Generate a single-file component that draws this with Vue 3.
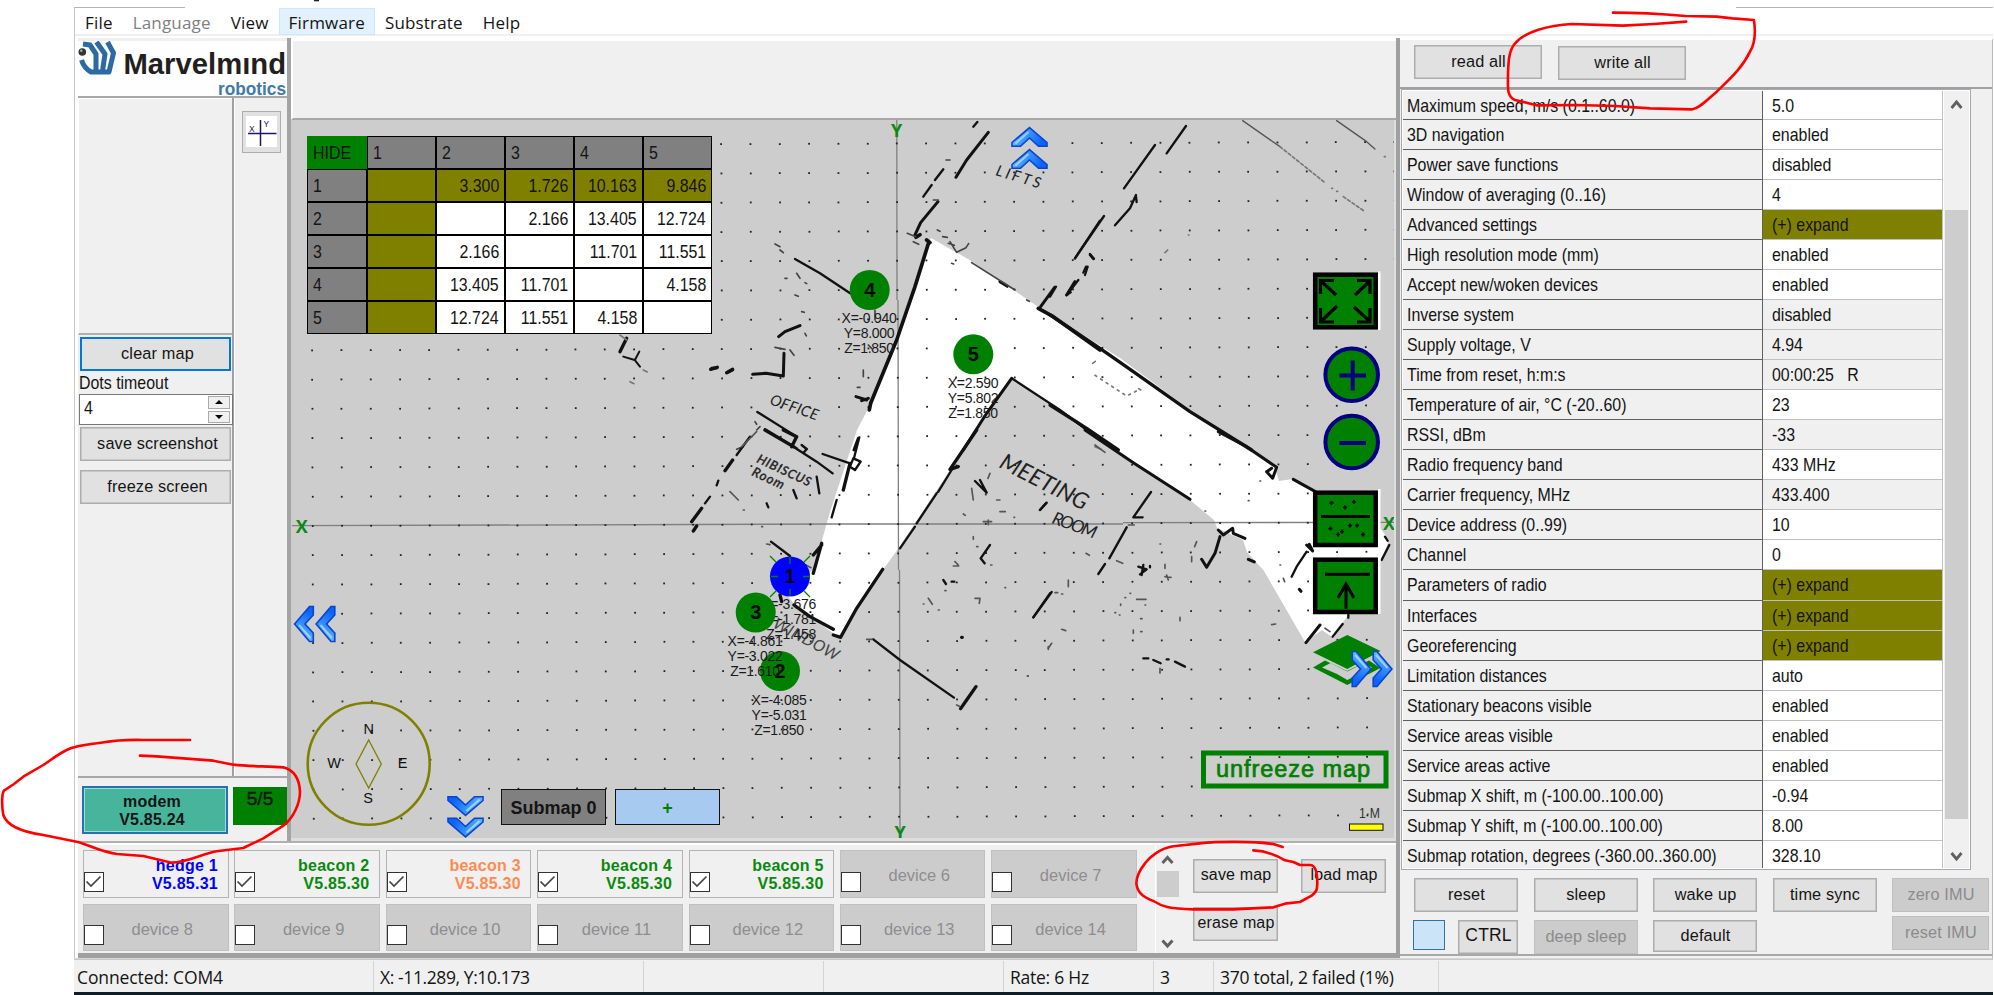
<script setup>
const menu = [
  { t: 'File' }, { t: 'Language', off: true }, { t: 'View' },
  { t: 'Firmware', hot: true }, { t: 'Substrate' }, { t: 'Help' },
]

const distances = [
  ['', '3.300', '1.726', '10.163', '9.846'],
  ['', '', '2.166', '13.405', '12.724'],
  ['', '2.166', '', '11.701', '11.551'],
  ['', '13.405', '11.701', '', '4.158'],
  ['', '12.724', '11.551', '4.158', ''],
]

const settings = [
  ['Maximum speed, m/s (0.1..60.0)', '5.0'],
  ['3D navigation', 'enabled'],
  ['Power save functions', 'disabled'],
  ['Window of averaging (0..16)', '4'],
  ['Advanced settings', '(+) expand', 'olive'],
  ['High resolution mode (mm)', 'enabled'],
  ['Accept new/woken devices', 'enabled'],
  ['Inverse system', 'disabled', 'ro'],
  ['Supply voltage, V', '4.94', 'ro'],
  ['Time from reset, h:m:s', '00:00:25\u00a0\u00a0 R', 'ro'],
  ['Temperature of air, °C (-20..60)', '23'],
  ['RSSI, dBm', '-33', 'ro'],
  ['Radio frequency band', '433 MHz'],
  ['Carrier frequency, MHz', '433.400', 'ro'],
  ['Device address (0..99)', '10'],
  ['Channel', '0'],
  ['Parameters of radio', '(+) expand', 'olive'],
  ['Interfaces', '(+) expand', 'olive'],
  ['Georeferencing', '(+) expand', 'olive'],
  ['Limitation distances', 'auto'],
  ['Stationary beacons visible', 'enabled'],
  ['Service areas visible', 'enabled'],
  ['Service areas active', 'enabled'],
  ['Submap X shift, m (-100.00..100.00)', '-0.94'],
  ['Submap Y shift, m (-100.00..100.00)', '8.00'],
  ['Submap rotation, degrees (-360.00..360.00)', '328.10'],
]

const devices = [
  { n: 'hedge 1', v: 'V5.85.31', c: 'blue' },
  { n: 'beacon 2', v: 'V5.85.30', c: 'green' },
  { n: 'beacon 3', v: 'V5.85.30', c: 'orange' },
  { n: 'beacon 4', v: 'V5.85.30', c: 'green' },
  { n: 'beacon 5', v: 'V5.85.30', c: 'green' },
  ...[6, 7, 8, 9, 10, 11, 12, 13, 14].map((i) => ({ n: 'device ' + i })),
]

const status = [
  ['Connected: COM4', 's1'], ['X: -11.289, Y:10.173', 's2'], ['', 's3'], ['', 's3'],
  ['Rate: 6 Hz', 's4'], ['3', 's5'], ['370 total, 2 failed (1%)', 's6'], ['', 's7'],
]

// Metre grid, very slightly rotated against the screen axes
const step = 29.27
const tilt = 0.0032
const dots = []
for (let j = -13; j <= 10; j++) {
  for (let i = -20; i <= 17; i++) {
    const x = 898 + step * (i + tilt * j)
    const y = 524 + step * (j - tilt * i)
    if (x > 294 && x < 1396 && y > 122 && y < 836) dots.push([Math.round(x * 3) / 3, Math.round(y * 3) / 3])
  }
}

const labels = [
  { x: 762, y: 609, w: 54, t: ['X=-3.676', 'Y=-1.781', 'Z=1.458'] },
  { x: 728, y: 646, w: 54, t: ['X=-4.861', 'Y=-3.022', 'Z=1.610'] },
  { x: 752, y: 704.5, w: 54, t: ['X=-4.085', 'Y=-5.031', 'Z=1.850'] },
  { x: 842, y: 323, w: 54, t: ['X=-0.940', 'Y=8.000', 'Z=1.850'] },
  { x: 948, y: 388, w: 50, t: ['X=2.590', 'Y=5.802', 'Z=1.850'] },
]
const beacons = [
  { n: 3, x: 755.7, y: 612.5 }, { n: 2, x: 780, y: 671 },
  { n: 4, x: 869.7, y: 290 }, { n: 5, x: 973.3, y: 354.3 },
]
const arrows = [
  [1029.5, 127, 0], [1029.5, 149, 0],
  [465.5, 816, 180], [465.5, 837.5, 180],
  [294, 624, -90], [315.5, 624, -90],
  [1371.5, 669, 90], [1392.5, 669, 90],
]
</script>

<template>
  <div class="stage">
    <div class="window">
      <nav class="menu">
        <span v-for="m in menu" :key="m.t" :class="{ off: m.off, hot: m.hot }">{{ m.t }}</span>
      </nav>
      <div class="body">
        <div class="work">
          <div class="upper">
            <aside class="left">
              <svg class="logo" width="209" height="56" viewBox="78 41 209 56">
                <g fill="none" stroke="#2b6aa3" stroke-width="5" stroke-linejoin="round">
                  <path d="M81.500 60 Q84 68 91 72 H109 L113.500 53 L107.500 42" />
                  <path d="M83 44 L90 45 L96 54 V71" />
                  <path d="M96.500 42 L105 54 L102.500 71" />
                </g>
                <circle cx="82.300" cy="52" r="3.800" fill="#333" />
                <circle cx="81.300" cy="50.800" r="1.200" fill="#aaa" />
                <text x="123.500" y="74" font-size="30" font-weight="700" fill="#231f20" textLength="162.500" lengthAdjust="spacingAndGlyphs">Marvelmınd</text>
                <text x="218" y="94.500" font-size="19" font-weight="700" fill="#4179a8" textLength="68" lengthAdjust="spacingAndGlyphs">robotics</text>
              </svg>
              <div class="tools">
                <div class="toolcol">
                  <div class="blank"></div>
                  <button class="btn focus">clear map</button>
                  <label class="cond">Dots timeout</label>
                  <div class="spin">
                    <span class="cond">4</span>
                    <div class="ud"><i><b class="up"></b></i><i><b class="dn"></b></i></div>
                  </div>
                  <button class="btn b1">save screenshot</button>
                  <button class="btn b2">freeze screen</button>
                </div>
                <div class="sidecol">
                  <div class="xy">
                    <svg width="31" height="31" viewBox="0 0 31 31">
                      <rect width="31" height="31" fill="#fff" />
                      <path d="M14.500 4 V30 M2 17.500 H30.500" stroke="#1c1464" stroke-width="1.500" />
                      <text x="3" y="15.500" font-size="8.500" fill="#1c1464">X</text>
                      <text x="17.500" y="11" font-size="8.500" fill="#1c1464">Y</text>
                    </svg>
                  </div>
                </div>
              </div>
              <div class="modemrow">
                <div class="modem">modem<br />V5.85.24</div>
                <div class="count">5/5</div>
              </div>
            </aside>
            <section class="center">
              <div class="top"></div>
              <div class="mapbox">
                <svg class="map" width="1104" height="719" viewBox="292 120 1104 719">
                  <defs>
                    <linearGradient id="chev" x1="0" y1="0" x2="1" y2="0.300">
                      <stop offset="0" stop-color="#9ad4ff" />
                      <stop offset="0.450" stop-color="#3f9cff" />
                      <stop offset="1" stop-color="#0a62ff" />
                    </linearGradient>
                  </defs>
                  <path d="M931 238 L968 259 L1040 308 L1120 358 L1217 430 L1275 468 L1279 481 L1293 479 L1314 491 L1380 528 L1389 540 L1383 557 L1352 610 L1332 637 L1322 630 L1305 642 L1264 571 L1247 552 L1243 540 L1217 528 L1214 520 L1190 500 L1084 430 L1012 378 L963 450 L950 470 L898 549 L885 567 L838 637 L795 605 L783 590 L813 570 L822 540 L830 512 L857 430 L870 405 L900 325 Z" fill="#fff" />
                  <path d="M292 525.700 L840 524 L1123 524 M1123 522.700 L1396 522.300 M896.800 120 L897 300 M898 300 L898.500 570 M899.500 570 L900 834" stroke="#808080" stroke-width="1.300" fill="none" />
                  <g fill="#222"><rect v-for="(d, i) in dots" :key="i" :x="d[0] - 0.800" :y="d[1] - 0.800" width="1.800" height="1.800" /></g>

                  <g fill="none" stroke="#111" stroke-linecap="round" stroke-linejoin="round">
                    <g transform="translate(290 110) scale(.3333)">
                      <path stroke-width="10" d="M1010 685 L990 725 M1262 778 L1282 772 M1310 788 L1328 778" />
                      <path stroke-width="6" d="M1000 740 L1034 750 L1050 770 M1048 725 L1036 748" />
                      <path stroke-width="5" stroke="#777" d="M990 675 L1010 690 M1060 780 l12 6 M1020 815 l12 6" />
                    </g>
                    <g transform="translate(700 100) scale(.3333)">
                      <path stroke-width="11" d="M687 425 L645 560 L590 720 L512 910 L508 930 M1015 625 L1060 650 L1200 750 M680 420 l10 8 M648 412 l12 -8" />
                      <path stroke-width="9" d="M935 835 L860 940 L790 1050 M768 232 L800 180 L865 97 M645 405 L662 368 L714 305 M468 890 L500 900 M505 895 L485 902 M158 823 L198 820 L250 828 M250 828 L252 760 M236 710 L255 695 L300 677 M82 818 l16 -8 M35 805 l16 -2 M475 1015 L462 1050 M1022 620 L1064 562 M1100 585 L1125 545 M900 545 l22 14" />
                      <path stroke-width="7" d="M285 477 L360 520 L455 583 M670 290 L695 255 M705 240 L730 208 M820 80 L832 66 M1125 475 L1200 362 M940 838 L1080 930 L1200 1020 M172 936 L290 1010 L275 1040 M195 988 L290 1045 M1155 525 l8 -25 M1170 462 l12 14" />
                      <path stroke-width="5" stroke="#444" d="M225 432 l15 8 M240 450 l10 8 M738 180 h12 M700 300 l15 0 M622 400 l25 10 M640 425 l16 8 M712 390 l8 4 M728 410 l14 2 M745 430 l18 6 M750 425 l20 32 l28 -14 l8 -12 M755 490 l6 2 M815 488 L945 570 M980 600 l8 4 M290 520 l10 15 M255 535 l6 0 M285 585 l10 4 M315 548 l5 3 M305 635 l8 2 M315 700 l4 8 M225 742 l30 6 M270 750 l12 16 M490 810 v20 M472 862 h8 M505 735 l10 10 M525 630 v30 M165 965 l5 8 M150 1010 l-15 20 M180 980 l-10 10 M130 1040 l-20 8 M310 1040 l12 8" />
                    </g>
                    <g transform="translate(1050 100) scale(.3333)">
                      <path stroke-width="10" d="M0 645 L150 745 L250 815 L420 935 L605 1050 M0 915 L110 985 L205 1050" />
                      <path stroke-width="7" d="M408 78 L350 160 M315 135 L222 265 M258 285 L240 325 L195 376 M162 348 L75 475 M120 465 l10 12 M108 500 l-8 18 M85 540 L50 585 l12 -8 M0 590 L18 560 M258 290 l2 16" />
                      <path stroke-width="4" stroke="#555" d="M578 62 L690 140 M860 62 L950 125 M950 125 l25 22" />
                      <path stroke-width="5" stroke="#777" stroke-dasharray="9 7" d="M690 140 L825 248 M880 290 L945 335" />
                      <path stroke-width="5" stroke="#777" stroke-dasharray="6 14" d="M135 826 L230 888 L262 872" />
                      <path stroke-width="5" stroke="#777" d="M345 458 l8 -8 M128 790 l8 -6 M266 866 l6 4 M1003 170 h3 M415 405 h2 M135 1040 l18 8 M845 265 h3 M860 274 h3" />
                    </g>
                    <g transform="translate(650 430) scale(.3333)">
                      <path stroke-width="10" d="M980 0 L900 118 l25 -8 M600 100 L580 180 M515 340 L490 430 M515 345 L490 375 M432 525 L480 560 L550 598 M550 615 L572 622 L620 535 L698 418 M345 0 L430 50 M400 0 L440 20 L425 50 M390 495 l5 20 M935 622 h2 M125 275 L155 235 M130 303 l10 -15 M225 122 L248 90 M932 836 L950 810 L978 770" />
                      <path stroke-width="7" d="M430 50 L500 95 L548 130 M518 72 L600 100 M628 22 L612 85 M610 85 L632 95 L615 120 L600 110 L610 85 M560 210 L545 262 M905 120 L865 185 M860 190 L800 280 M795 290 L750 355 M363 335 L420 378 M670 628 L750 690 L912 803 M1150 562 L1200 490 M1020 345 L992 385 L1004 400 M990 150 l20 38 l-35 -35 M880 450 l8 12 M905 455 h8 M300 20 L260 75 M180 200 L165 220 M205 152 l-5 14 M455 45 l15 12 l-8 10 M500 140 l8 50 M430 180 l10 25 M1188 220 L1170 240 M350 220 l5 12" />
                      <path stroke-width="5" stroke="#555" d="M240 185 l25 25 M280 240 h3 M335 290 h3 M350 342 l10 2 M915 395 l10 10 M910 408 h16 M835 505 l12 18 M820 522 h2 M865 540 h3 M975 505 l15 0 l-2 15 M970 320 v8 M980 350 h4 M1000 275 h25 M1015 270 v14 M1040 210 h10 M1050 245 h16 M1092 262 h2 M940 252 l6 4 M965 175 l5 35 M1020 130 l-6 15 M650 628 h15 M920 825 l8 4 M1132 738 h3 M1065 473 h2 M885 482 h3 M1022 405 h4 M1195 650 v8 M468 405 l15 8 M320 5 L275 50" />
                    </g>
                    <g transform="translate(1000 430) scale(.3333)">
                      <path stroke-width="9" d="M255 0 L400 98 L570 208 M655 5 L740 50 L830 112 L818 145 L800 125 L815 115 M880 148 L945 184 M655 300 L670 315 L698 295 L700 310 L735 325 M660 320 L645 370 L620 412 L605 388 M920 345 l18 18 l-10 -20 M918 638 L960 585 M898 478 l5 6 M745 388 l18 8" />
                      <path stroke-width="7" d="M453 186 L400 262 h28 M380 292 L328 385 M315 402 L295 432 M100 562 L155 486 M920 365 L890 410 L875 440 M998 620 L1028 582 M1045 555 v8 M1168 345 L1145 390 M1155 320 l8 12 M430 685 h15 M460 690 l22 10 M500 688 h6 M525 695 l30 15 M120 240 L140 218 M415 410 l25 8 l-20 15 M430 405 l-5 30 M450 408 v4" />
                      <path stroke-width="5" stroke="#555" d="M285 45 l30 22 M385 285 h18 M258 370 l10 6 M185 598 l12 4 M145 655 l10 -15 M165 488 h8 M185 492 h3 M205 450 v20 M345 548 h2 M358 555 h2 M362 522 v4 M375 503 h2 M390 490 h2 M410 508 h28 M435 525 h2 M400 600 v10 M422 605 h4 M422 566 h4 M540 562 v10 M815 584 l12 -2 M495 440 l18 2 M500 435 l5 15 M495 415 v-12 M590 335 l-6 15 M575 380 v15 M615 243 h2 M780 153 h2 M745 212 h2 M840 405 h2 M850 445 l4 10 M480 715 v14 M480 342 h2 M350 392 l18 8 M975 595 l15 10 M83 738 h2" />
                    </g>
                  </g>

                  <g class="hand" fill="#222">
                    <text transform="translate(998 467) rotate(27)" font-size="23" textLength="96">MEETING</text>
                    <text transform="translate(1051 523) rotate(20)" font-size="17.500" textLength="46">ROOM</text>
                    <text transform="translate(756 462) rotate(25)" font-size="12.500" textLength="58" stroke="#222" stroke-width="0.400">HIBISCUS</text>
                    <text transform="translate(751 475) rotate(25)" font-size="13" textLength="34" stroke="#222" stroke-width="0.400">Room</text>
                    <text transform="translate(769 404) rotate(19)" font-size="15" textLength="50">OFFICE</text>
                    <text transform="translate(995 175) rotate(17)" font-size="15" textLength="46">LIFTS</text>
                    <text transform="translate(772 627) rotate(28)" font-size="16" textLength="72" fill="#444">WINDOW</text>
                  </g>

                  <circle cx="790" cy="576.500" r="20" fill="#0000ff" />
                  <path d="M790 557 v7 M790 589 v7 M771 576.500 h7 M803 576.500 h7 M770 556 l6 6 M810 556 l-6 6 M770 597 l6 -6 M810 597 l-6 -6" stroke="#008000" stroke-width="1.300" />
                  <text class="num" x="790" y="583" text-anchor="middle">1</text>
                  <g v-for="(b, k) in beacons" :key="b.n">
                    <g v-if="k === 0" class="xyz">
                      <text v-for="(t, i) in labels[0].t" :key="t" x="816" :y="labels[0].y + i * 15" text-anchor="end">{{ t }}</text>
                    </g>
                    <circle :cx="b.x" :cy="b.y" r="20" fill="#008000" />
                    <text class="num" :x="b.x" :y="b.y + 6.500" text-anchor="middle">{{ b.n }}</text>
                  </g>
                  <g class="xyz" v-for="l in labels.slice(1)" :key="l.x">
                    <text v-for="(t, i) in l.t" :key="t" :x="l.x + l.w / 2" :y="l.y + i * 15" text-anchor="middle">{{ t }}</text>
                  </g>

                  <g class="axis">
                    <text x="896.500" y="137" text-anchor="middle">Y</text>
                    <text x="900" y="839" text-anchor="middle">Y</text>
                    <text x="301.700" y="532.500" text-anchor="middle">X</text>
                    <text x="1389" y="529.500" text-anchor="middle">X</text>
                  </g>

                  <g fill="none" stroke="#808000">
                    <circle cx="368.700" cy="763.700" r="61" stroke-width="2.600" />
                    <path d="M368.700 740 L381.300 764 L368.700 788 L356 764 Z" stroke-width="1.300" />
                  </g>
                  <g font-size="14.500" fill="#111" text-anchor="middle">
                    <text x="368.700" y="733.500">N</text><text x="334" y="768">W</text>
                    <text x="402.700" y="768">E</text><text x="368" y="802.500">S</text>
                  </g>

                  <g>
                    <path d="M1378 271.500 h2.500 V330 h-2.500 Z M1378 489 h2.500 V547 h-2.500 Z M1378 556 h2.500 V614 h-2.500 Z" fill="#fff" />
                    <g fill="#008000" stroke="#000" stroke-width="4.500">
                      <rect x="1315.200" y="274.700" width="60.500" height="52.600" />
                      <rect x="1315.200" y="492.700" width="60.500" height="52.300" />
                      <rect x="1315.200" y="559.700" width="60.500" height="52.300" />
                    </g>
                    <g fill="none" stroke="#000" stroke-width="3.200">
                      <path d="M1334 280.500 H1320.500 V294 M1321 281 L1336 295 M1357 280.500 H1370 V294 M1370 281 L1355 295 M1320.500 308 V322 H1334 M1321 321.500 L1337 306 M1370 308 V322 H1357 M1370 321.500 L1354 307" />
                      <path d="M1321 516.500 H1370 M1325 574.300 H1370" stroke-width="3" />
                      <path d="M1346 609 V583 M1338 598 L1346 584 L1354 598" stroke-width="3" />
                    </g>
                    <path d="M1331.500 501v4m-2-2h4 M1354 500v4m-2-2h4 M1345 505.500v4m-2-2h4 M1330.500 526.500v4m-2-2h4 M1350 523.500v4m-2-2h4 M1357 523.500v4m-2-2h4 M1342 529.500v4m-2-2h4 M1338 532.500v4m-2-2h4 M1363 532.500v4m-2-2h4" stroke="#000" stroke-width="1.600" />
                    <g fill="#008000" stroke="#000080" stroke-width="4">
                      <circle cx="1351.700" cy="374.700" r="26.300" />
                      <circle cx="1351.700" cy="442" r="26.300" />
                      <path d="M1339.500 375.500 H1366 M1352.700 360.500 V390.500 M1339.500 443 H1366" />
                    </g>
                    <path d="M1313 667.500 L1325 660.500 L1347 671 L1369 660.500 L1380.500 668 L1347.300 685 Z" fill="#008000" />
                    <path d="M1322 667.500 L1330.500 663 L1347.300 671.500 L1364 663 L1372 667.500 L1347.300 680 L1337 674 Z" fill="#cdcdcd" />
                    <path d="M1313 652.300 L1347.300 635 L1380.500 651 L1347.300 669 Z" fill="#008000" />
                  </g>

                  <rect x="1203.500" y="753" width="182.500" height="33" fill="none" stroke="#008000" stroke-width="5" />
                  <text x="1216" y="776.500" font-size="23.500" fill="#008000" stroke="#008000" stroke-width="0.700" textLength="154">unfreeze map</text>
                  <text x="1359" y="818" font-size="14" fill="#333" textLength="21" lengthAdjust="spacingAndGlyphs">1·M</text>
                  <rect x="1349.500" y="824" width="33.500" height="6.300" fill="#ff0" stroke="#111" />

                  <g v-for="(a, i) in arrows" :key="i" :transform="`translate(${a[0]} ${a[1]}) rotate(${a[2]})`">
                    <path d="M0 0.600 L17.500 15.500 V19.300 H9 L0 11 L-9 19.300 H-17.500 V15.500 Z" fill="url(#chev)" stroke="#0a45c8" stroke-width="1.600" />
                    <path d="M-14 16.500 L-1 5" stroke="#d5efff" stroke-width="2" opacity=".6" />
                  </g>
                </svg>
                <div class="dist">
                  <div class="h hide"><span class="cond">HIDE</span></div>
                  <div v-for="n in 5" :key="'c' + n" class="h"><span class="cond">{{ n }}</span></div>
                  <template v-for="(r, i) in distances" :key="i">
                    <div class="h"><span class="cond">{{ i + 1 }}</span></div>
                    <div v-for="(c, j) in r" :key="j" class="d" :class="{ ol: i === 0 || j === 0 }"><span class="cond">{{ c }}</span></div>
                  </template>
                </div>
                <div class="sub sub0">Submap 0</div>
                <div class="sub plus">+</div>
              </div>
            </section>
          </div>
          <div class="lower">
            <div class="devs">
              <div v-for="d in devices" :key="d.n" class="dev" :class="d.c || 'none'">
                <i class="chk"><svg v-if="d.c" width="17" height="17" viewBox="0 0 17 17"><path d="M1.500 8.500 L6 13 L15.500 3.500" fill="none" stroke="#444" stroke-width="1.700" /></svg></i>
                <span>{{ d.n }}<br v-if="d.v" />{{ d.v }}</span>
              </div>
            </div>
            <div class="vbar">
              <svg width="23" height="105" viewBox="0 0 23 105">
                <path d="M6.500 16 L11.500 10.500 L16.500 16 M6.500 93.500 L11.500 99 L16.500 93.500" fill="none" stroke="#606060" stroke-width="3" />
                <rect x="1" y="24" width="22" height="26" fill="#cdcdcd" />
              </svg>
            </div>
            <div class="mapbtns">
              <button class="btn">save map</button><button class="btn">load map</button>
              <button class="btn">erase map</button>
            </div>
          </div>
        </div>
        <aside class="right">
          <div class="rw">
            <button class="btn">read all</button><button class="btn wr">write all</button>
          </div>
          <div class="grid">
            <div class="rows">
              <div v-for="s in settings" :key="s[0]" class="row">
                <div class="k"><span class="cond">{{ s[0] }}</span></div>
                <div class="v" :class="s[2]"><span class="cond">{{ s[1] }}</span></div>
              </div>
            </div>
            <svg class="gbar" width="25" height="777" viewBox="0 0 25 777">
              <rect x="1" y="119" width="23" height="609" fill="#cdcdcd" />
              <path d="M7.500 17 L12.500 11 L17.500 17 M7.500 762 L12.500 768 L17.500 762" fill="none" stroke="#606060" stroke-width="2.800" />
            </svg>
          </div>
          <div class="cmds">
            <div class="col c1">
              <button class="btn">reset</button>
              <div class="pair"><i class="bluebox"></i><button class="btn ctrl">CTRL</button></div>
            </div>
            <div class="col"><button class="btn">sleep</button><button class="btn dis">deep sleep</button></div>
            <div class="col"><button class="btn">wake up</button><button class="btn def">default</button></div>
            <div class="col"><button class="btn">time sync</button></div>
            <div class="col c5"><button class="btn dis">zero IMU</button><button class="btn dis">reset IMU</button></div>
          </div>
        </aside>
      </div>
      <footer class="status">
        <div v-for="(s, i) in status" :key="i" :class="s[1]">{{ s[0] }}</div>
      </footer>
      <div class="edge"></div>
    </div>
    <svg class="ink" width="1994" height="995" viewBox="0 0 1994 995">
      <path d="M74 7.500 H185 M1736 7.500 H1993" stroke="#b5b5b5" />
      <rect x="314" y="0" width="5" height="1.300" fill="#222" />
      <g fill="none" stroke="#ff0000" stroke-width="2.600" stroke-linecap="round" stroke-linejoin="round">
        <path vector-effect="non-scaling-stroke" transform="translate(0 660) scale(.33333)" d="M570 240 H430 C350 238 330 244 290 250 C240 256 215 262 200 270 C170 285 150 302 130 315 L70 350 L42 372 L12 392 C5 400 5 440 10 465 C20 495 60 515 130 525 L230 545 C260 552 300 575 350 582 L430 588 L515 608 C560 608 600 584 650 574 L730 564 L790 535 L850 497 C880 475 900 430 900 395 C898 355 880 330 850 322 C800 318 750 320 700 314 L640 302 L560 296 L470 289 L420 287" />
        <path vector-effect="non-scaling-stroke" transform="translate(900 780) scale(.33333)" d="M1148 201 L1120 192 C1060 184 960 184 900 190 L820 199 C780 205 750 230 735 250 C715 275 709 295 709 310 C712 335 725 350 760 363 C790 382 810 386 880 388 H1000 L1120 382 L1160 370 L1200 366 L1235 347 C1255 330 1250 325 1252 310 C1252 270 1245 255 1230 255 H1200 L1180 246 L1155 241 C1120 220 1090 212 1060 211" />
        <path vector-effect="non-scaling-stroke" transform="translate(1380 0) scale(.39155 .33333)" d="M595 38 C680 38 720 42 780 48 L860 50 L900 55 L955 60 C960 100 958 130 945 155 C925 205 890 240 860 275 C830 305 815 325 798 328 L690 325 L600 318 L500 315 L400 316 L345 300 C325 290 326 270 327 220 C328 180 330 150 345 130 C370 95 430 76 490 72 L620 77 L700 72 L782 65" />
      </g>
    </svg>
  </div>
</template>

<style>
body { background: #fff; overflow: hidden; }
</style>

<style scoped>
* { box-sizing: border-box; }
.stage { position: relative; width: 1994px; height: 995px; padding: 8px 1px 0 74px; overflow: hidden; font-family: "Liberation Sans", Arial, sans-serif; color: #141414; }
.ink { position: absolute; left: 0; top: 0; pointer-events: none; }
.window { height: 987px; background: #fff; display: flex; flex-direction: column; }
.menu { height: 30px; padding: 0 0 3px 0; border-left: 1px solid #c8c8c8; display: flex; background: linear-gradient(#fff 26px, #f0f0f0 26px, #f0f0f0 28px, #fff 28px); flex: none; }
.menu span { padding: 0 9px; font: 17px/27px "Open Sans", sans-serif; letter-spacing: .18px; border: 1px solid transparent; }
.menu .off { color: #808080; }
.menu .hot { background: #e2f1fd; border-color: #cce8ff; }
.body { display: flex; height: 921px; border-left: 1px solid #c8c8c8; padding-left: 3px; flex: none; border-bottom: 1px solid #d8d8d8; }
.work { width: 1322px; display: flex; flex-direction: column; border-right: 4px solid #a0a0a0; flex: none; }
.upper { display: flex; height: 805px; border-bottom: 2px solid #b0b0b0; flex: none; }
.left { width: 213px; border-right: 4px solid #a4a4a4; background: #f0f0f0; flex: none; display: flex; flex-direction: column; }
.logo { display: block; background: #fdfefd; margin-top: 3px; font-family: "Liberation Sans", sans-serif; flex: none; }
.tools { height: 682px; display: flex; border-top: 2px solid #a8a8a8; border-bottom: 2px solid #a8a8a8; flex: none; margin-top: -1px; }
.toolcol { width: 156px; border-right: 2px solid #a0a0a0; padding: 0 2px; display: flex; flex-direction: column; flex: none; }
.blank { height: 237px; margin: 0 -2px 2px; border-bottom: 2px solid #b0b0b0; border-top: 1px solid #fff; border-left: 1px solid #fff; flex: none; }
.btn { font: 16.300px/1 "Liberation Sans", Arial, sans-serif; letter-spacing: .15px; color: #141414; background: #e1e1e1; border: 1px solid #adadad; box-shadow: inset 0 0 0 .5px #adadad; border-radius: 0; padding: 0 0 2px 1px; height: 34px; white-space: nowrap; flex: none; }
.btn.dis { background: #ccc; border-color: #bfbfbf; box-shadow: none; color: #8b8b8b; }
.btn.focus { border: 2px solid #0078d7; box-shadow: none; }
.toolcol .btn { width: 151px; padding-left: 4px; }
.cond { display: inline-block; font-size: 18.500px; transform: scaleX(.86); transform-origin: left center; white-space: nowrap; }
label.cond { line-height: 22px; height: 22px; margin-left: -1px; margin-top: 1px; }
.spin { margin-left: -1px; width: 154px; height: 31px; border: 1.500px solid #777; background: #fff; display: flex; justify-content: space-between; padding: 1px 2px 1px 4px; line-height: 24px; flex: none; }
.ud { display: flex; flex-direction: column; gap: 2px; width: 22px; }
.ud i { height: 12.500px; background: #f0f0f0; border: 1px solid #aaa; display: flex; align-items: center; justify-content: center; }
.ud b { border: 4px solid transparent; }
.ud .up { border-bottom-color: #000; border-top-width: 0; }
.ud .dn { border-top-color: #000; border-bottom-width: 0; }
.toolcol .b1 { margin-top: 2px; }
.toolcol .b2 { margin-top: 9px; }
.sidecol { flex: 1; border-left: 1px solid #fff; padding: 13px 0 0 7px; }
.xy { width: 39px; height: 42px; background: #e1e1e1; border: 1.500px solid #adadad; padding: 4px 3px; }
.modemrow { flex: 1; display: flex; padding: 8px 0 0 4px; }
.modem { width: 146px; height: 48px; background: #47b59b; border: 2px solid #2a6fb0; box-shadow: inset 0 0 0 1px #9dd; text-align: center; font: bold 16px/18px "Liberation Sans", sans-serif; letter-spacing: .2px; padding: 5px 6px 0 0; flex: none; }
.count { width: 55px; height: 38px; margin: 1px 0 0 5px; background: #008000; text-align: center; font-size: 19px; line-height: 24px; -webkit-text-stroke: .4px #141414; }
.center { width: 1105px; flex: none; background: #f0f0f0; }
.top { height: 82px; border-top: 3px solid #fff; border-left: 2px solid #fff; border-bottom: 2px solid #a8a8a8; }
.mapbox { position: relative; height: 721px; background: #cdcdcd; border-right: 2px solid #dedede; border-bottom: 3px solid #dedede; overflow: hidden; }
.map { display: block; margin-left: 1px; font-family: "Liberation Sans", sans-serif; }
.hand { font-family: "Lato", sans-serif; font-style: italic; }
.num { font: bold 20px "Liberation Sans", sans-serif; fill: #0a0a0a; }
.xyz { font-size: 14px; fill: #1a1a1a; letter-spacing: -.3px; }
.axis { font: bold 18px "Open Sans", sans-serif; fill: #0a8a12; }
.dist { position: absolute; left: 16px; top: 16px; width: 405px; height: 198px; display: grid; grid-template-columns: 60px repeat(5, 69px); grid-template-rows: repeat(6, 33px); background: #000; overflow: hidden; }
.dist div { border: 1px solid #000; padding: 0 5px; display: flex; align-items: center; min-width: 0; }
.h { background: #808080; }
.dist .hide { background: #008000; border-color: #008000; }
.d { background: #fff; }
.dist .d { justify-content: flex-end; }
.d .cond { transform-origin: right center; }
.dist .ol { background: #808000; }
.sub { position: absolute; top: 669px; height: 36px; width: 105px; border: 1.500px solid #111; font: bold 18px/36px "Liberation Sans", sans-serif; text-align: center; }
.sub0 { left: 210px; background: #808080; }
.plus { left: 324px; background: #a6caf0; color: #008000; }
.lower { height: 115px; border-top: 2px solid #fff; border-bottom: 5px solid #a0a0a0; background: #f0f0f0; display: flex; flex: none; padding-left: 5px; }
.devs { width: 1072px; display: grid; grid-template-columns: repeat(7, 145.500px); gap: 6px 5.900px; grid-auto-rows: 47.500px; align-content: start; padding-top: 5px; flex: none; }
.dev { border: 1.500px solid #b4b4b4; display: flex; justify-content: flex-end; position: relative; font: bold 16px/18px "Liberation Sans", sans-serif; letter-spacing: .25px; padding: 6px 9.500px 0 0; text-align: right; }
.dev span { white-space: nowrap; }
.blue { color: #0000ff; } .green { color: #098a0c; } .orange { color: #ff8a50; }
.dev.none { background: #ccc; border-color: #c0c0c0; color: #8e8e8e; font-weight: 400; font-size: 16.500px; letter-spacing: 0; padding: 15px 0 0 13px; justify-content: center; }
.chk { position: absolute; left: 0; bottom: 5px; width: 20px; height: 20px; border: 1.500px solid #333; background: #fff; display: block; }
.chk svg { display: block; }
.vbar { width: 32px; border-left: 1px solid #fff; padding-top: 2px; flex: none; }
.mapbtns { display: grid; grid-template-columns: 85px 85px; grid-template-rows: 34px 34px; gap: 14px 23px; padding: 14px 0 0 6px; }
.mapbtns .btn { font-size: 16px; }
.right { width: 593px; background: #f0f0f0; border-top: 2px solid #fff; flex: none; border-right: 1px solid #b8b8b8; }
.rw { height: 49px; padding: 5px 0 0 14px; display: flex; gap: 16px; border-bottom: 2px solid #a0a0a0; }
.rw .btn { width: 128px; }
.wr { margin-top: 1px; }
.grid { margin-left: 1px; width: 570px; height: 781px; border: 1.500px solid #a8a8b0; background: #fff; padding: 1px 0 0 1px; display: flex; overflow: hidden; }
.rows { width: 540px; height: 777px; overflow: hidden; flex: none; }
.row { display: grid; grid-template-columns: 360px 180px; grid-template-rows: 100%; height: 30.040px; }
.row:first-child { height: 29px; }
.k, .v { display: flex; align-items: center; padding-top: 1px; overflow: hidden; }
.k { background: #f0f0f0; border-right: 1px solid #606060; border-bottom: 1px solid #606060; padding-left: 4px; }
.v { background: #fff; border-bottom: 1px solid #c0c0c0; border-right: 1px solid #c0c0c0; padding-left: 9px; }
.ro { background: #f0f0f0; }
.olive { background: #808000; }
.gbar { background: #f0f0f0; margin-left: 1px; flex: none; }
.cmds { display: flex; gap: 15.500px; padding: 8px 0 0 14px; height: 86px; border-bottom: 2px solid #a8a8a8; }
.col { width: 104px; display: flex; flex-direction: column; gap: 8px; }
.pair { display: flex; justify-content: space-between; }
.bluebox { width: 32px; height: 30px; background: #cce4f7; border: 1.500px solid #2a72b0; margin-left: -1px; }
.ctrl { width: 60px; font-size: 17.500px; }
.def { height: 32px; }
.c5 { width: 97px; gap: 4px; }
.status { display: flex; height: 33px; background: #f0f0f0; font: 17.500px/32px "Open Sans", sans-serif; letter-spacing: -.25px; padding-top: 1px; flex: none; border-top: 1px solid #c8c8c8; }
.status div { border-right: 1px solid #d4d4d4; padding-left: 6px; white-space: nowrap; flex: none; }
.status .s1 { width: 300px; padding-left: 3px; letter-spacing: -.1px; }
.s2 { width: 270px; } .s3 { width: 180px; } .s4 { width: 150px; } .s5 { width: 60px; } .s6 { width: 225px; }
.s2 { letter-spacing: -.4px; }
.status .s7 { flex: 1; border: 0; }
.edge { flex: 1; background: #101c26; }
</style>
